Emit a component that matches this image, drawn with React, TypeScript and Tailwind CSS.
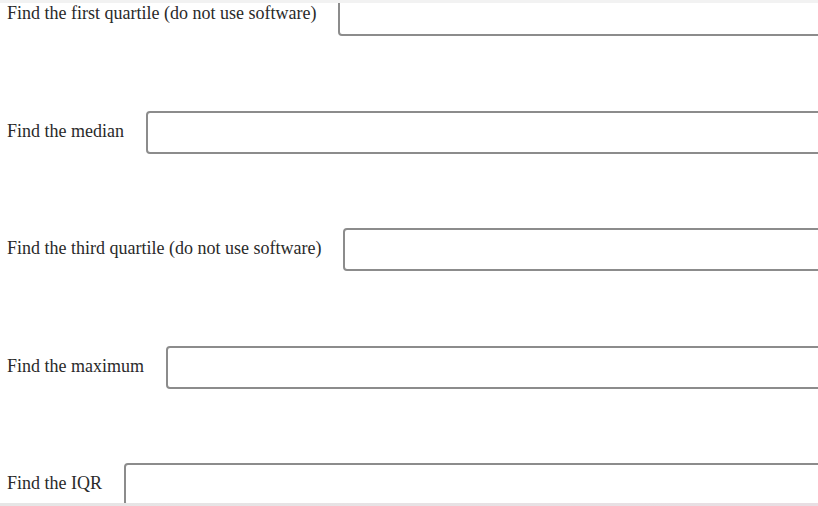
import React from "react";

const questions = [
  "Find the first quartile (do not use software)",
  "Find the median",
  "Find the third quartile (do not use software)",
  "Find the maximum",
  "Find the IQR",
];

const App = () => {
  return (
    <div className="h-[506px] w-[818px] flex flex-col overflow-hidden bg-white font-['Liberation_Serif',serif]">
      {/* top strip */}
      <div className="h-[3px] shrink-0 bg-[#f2f2f2] z-10" />

      <main className="flex-1 overflow-hidden">
        <div className="-mt-[10px] flex flex-col gap-[74.5px]">
          {questions.map((q) => (
            <div key={q} className="flex items-center pl-[7px]">
              <label className="text-[18px] leading-[22px] -mt-[3px] text-[#2a2a2a] whitespace-nowrap mr-[22px]">
                {q}
              </label>
              <input
                type="text"
                className="h-[43px] flex-1 -mr-[20px] rounded-[4px] border-2 border-[#8c8c8c] bg-white outline-none"
              />
            </div>
          ))}
        </div>
      </main>

      {/* bottom strip */}
      <div className="h-[3px] shrink-0 bg-gradient-to-r from-[#e6e6e6] to-[#e8dee3]" />
    </div>
  );
};

export default App;
